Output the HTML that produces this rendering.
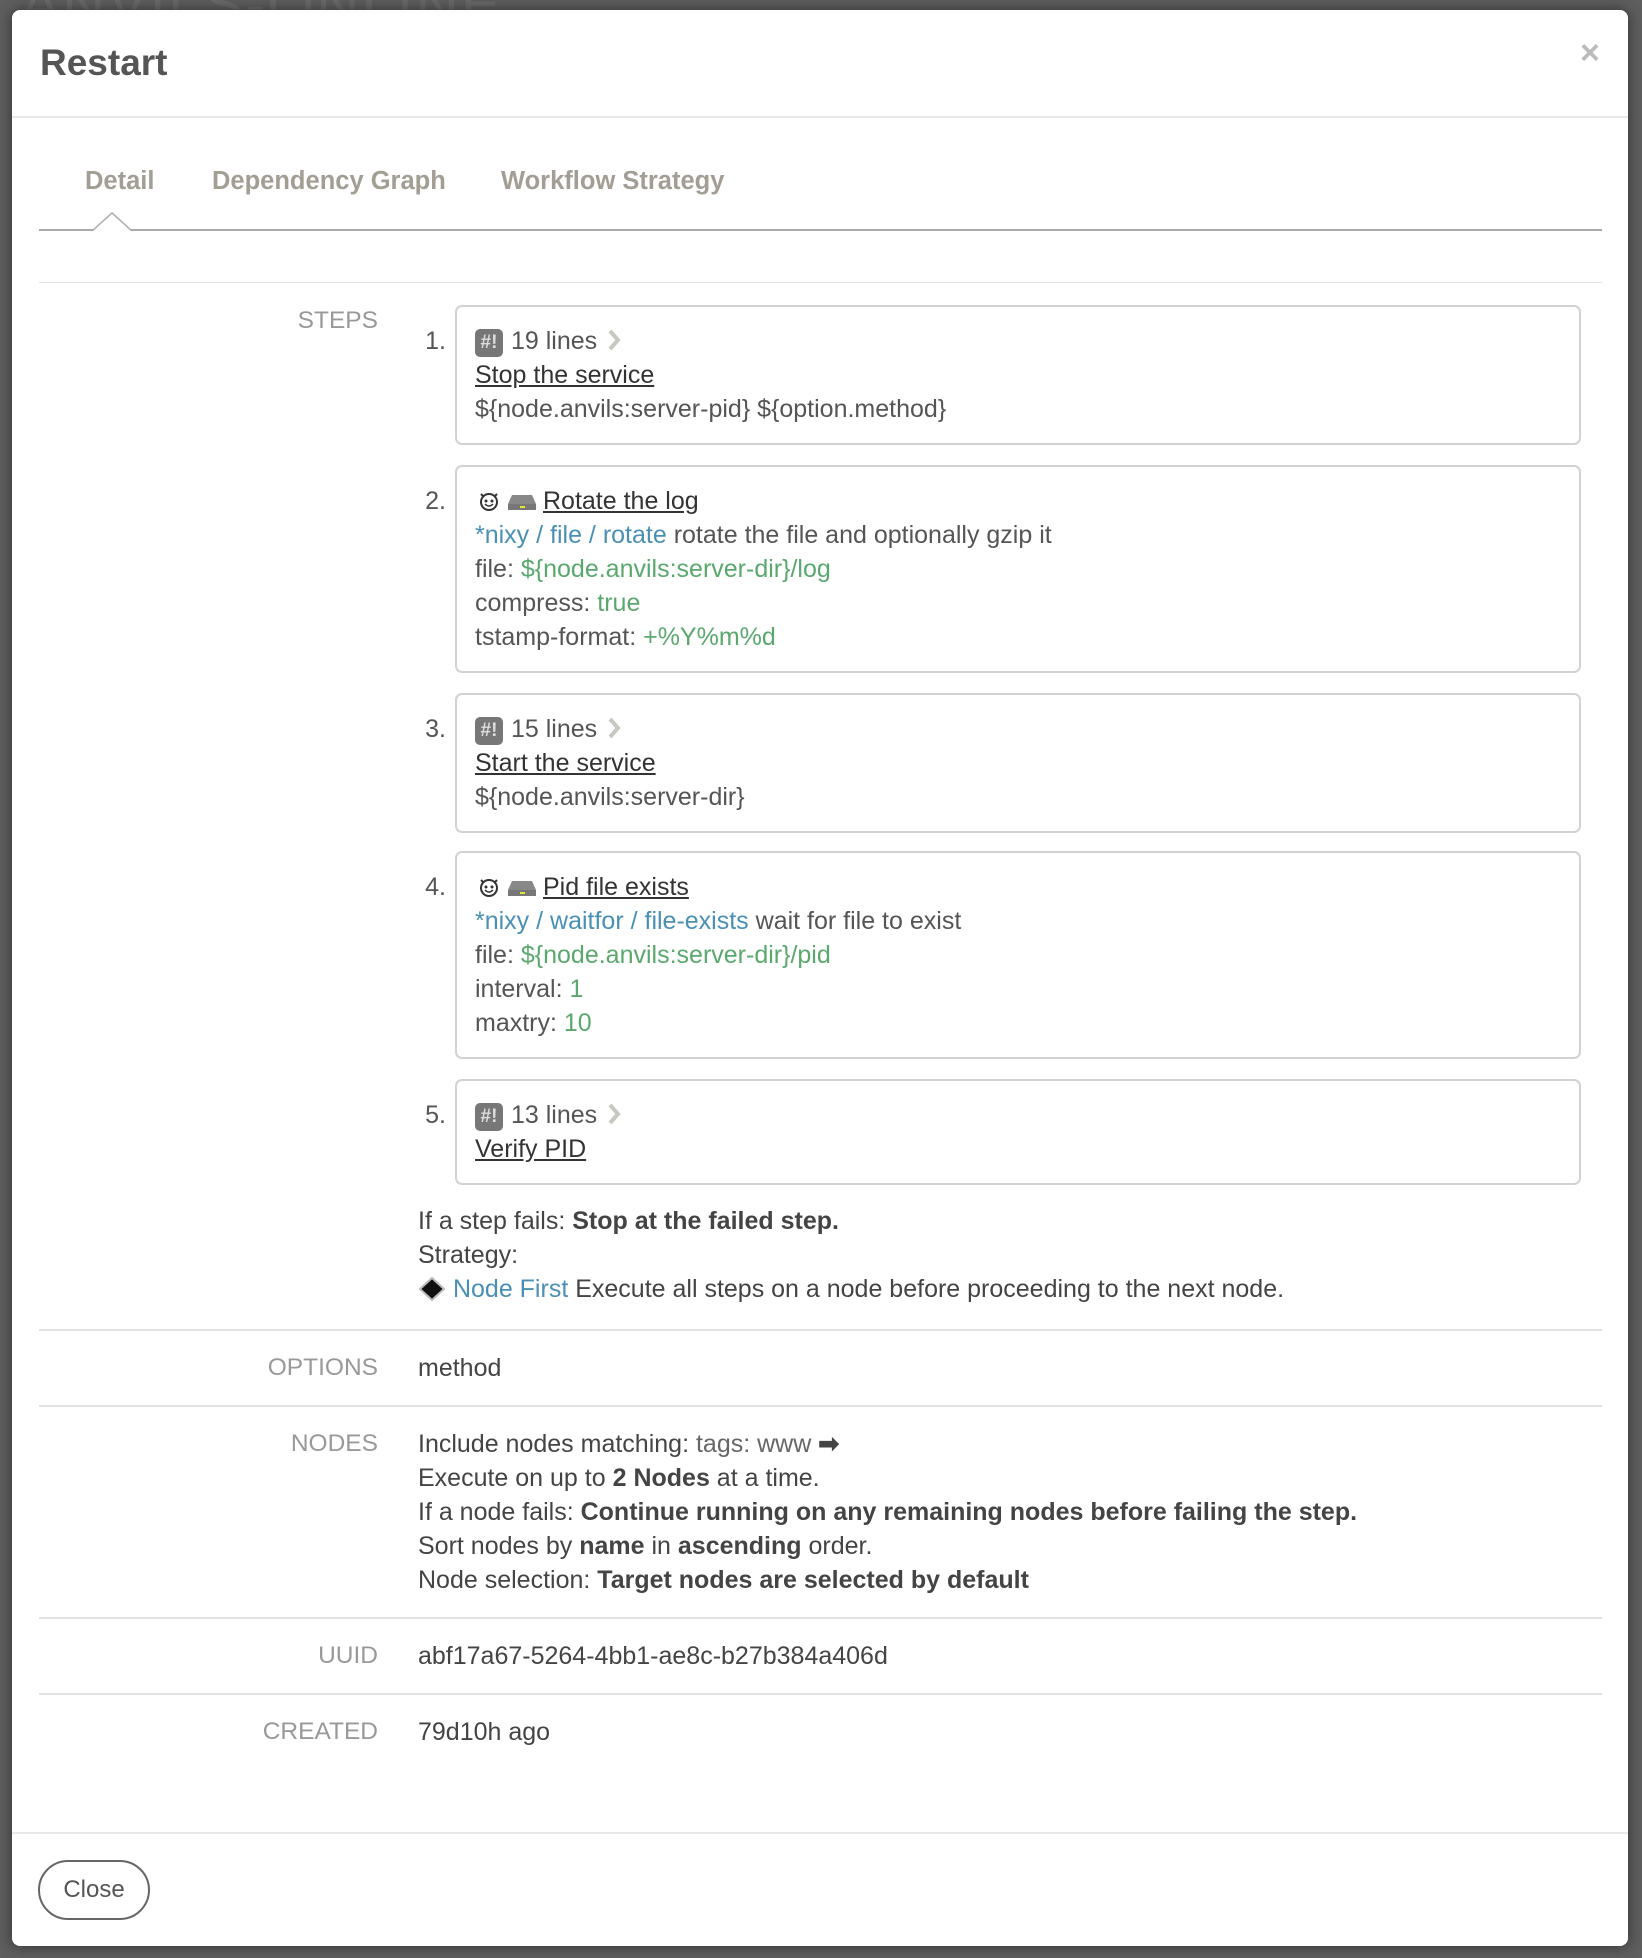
<!DOCTYPE html>
<html><head><meta charset="utf-8"><style>
*{box-sizing:border-box;margin:0;padding:0}
body{width:1642px;height:1958px;background:#5e5e5e;font-family:"Liberation Sans",sans-serif;position:relative;overflow:hidden;color:#444}
.bgt{position:absolute;left:20px;top:-30px;font-size:60px;color:#6a6a6a;letter-spacing:2px}
.modal{position:absolute;left:12px;top:10px;width:1616px;height:1936px;background:#fff;border-radius:8px;box-shadow:0 0 14px rgba(0,0,0,.5)}
.a{position:absolute}
.title{left:28px;top:32px;font-size:37px;font-weight:bold;color:#555}
.x{left:1568px;top:24px;font-size:34px;color:#bbb;font-weight:bold}
.hl{left:0;width:1616px;height:2px;background:#e8e8e8}
.tab{top:157px;font-size:25.5px;font-weight:bold;color:#a39e94}
.line{left:27px;width:1563px;height:1px;background:#e2e2e2}
.lab{width:366px;text-align:right;font-size:24.5px;color:#999;line-height:34px}
.box{left:443px;width:1126px;border:2px solid #d2d2d2;border-radius:7px;padding:17px 0 0 18px;font-size:25px;line-height:34px;color:#555;white-space:nowrap}
.num{width:434px;text-align:right;font-size:25px;line-height:34px;color:#555}
.u{text-decoration:underline;color:#333}
.b{color:#4a90b5}.g{color:#5aa86e}
.txt{left:406px;font-size:25px;line-height:34px;color:#444;white-space:nowrap}
.sh{display:inline-block;width:28px;height:28px;background:#777;border-radius:5px;color:#ddd;font-size:19px;line-height:28px;text-align:center;vertical-align:baseline;position:relative;top:-1px;font-weight:bold;margin-right:8px}
.chev{display:inline-block;vertical-align:-2px;margin-left:10px}
.btn{left:26px;top:1850px;width:112px;height:60px;border:2px solid #666;border-radius:30px;text-align:center;line-height:56px;font-size:24px;color:#555}
</style></head><body>
<div class="bgt">ANVILS-ONLINE</div>
<div class="modal">
<div class="a title">Restart</div>
<div class="a x">×</div>
<div class="a hl" style="top:106px"></div>
<div class="a tab" style="left:73px">Detail</div>
<div class="a tab" style="left:200px">Dependency Graph</div>
<div class="a tab" style="left:489px">Workflow Strategy</div>
<div class="a" style="left:27px;top:219px;width:1563px;height:2px;background:#aaa"></div>
<svg class="a" style="left:80px;top:202px" width="42" height="20"><path d="M0 19 L20 1 L40 19" fill="#fff" stroke="#aaa" stroke-width="1.5"/><rect x="2" y="18" width="36" height="4" fill="#fff"/></svg>
<div class="a line" style="top:272px"></div>

<div class="a lab" style="top:294px">STEPS</div>

<div class="a num" style="top:314px">1.</div>
<div class="a box" style="top:295px;height:140px"><span class="sh">#!</span>19 lines<svg class="chev" width="14" height="22"><path d="M3 2 L11 11 L3 20" stroke="#c8c8c0" stroke-width="4" fill="none"/></svg><br><span class="u">Stop the service</span><br>${node.anvils:server-pid} ${option.method}</div>

<div class="a num" style="top:474px">2.</div>
<div class="a box" style="top:455px;height:208px">
<svg width="24" height="22" style="vertical-align:-3px;margin:0 6px 0 2px"><circle cx="12" cy="12" r="8" fill="none" stroke="#333" stroke-width="2"/><path d="M4 4 L7 7 M20 4 L17 7" stroke="#333" stroke-width="2"/><circle cx="9" cy="11" r="1.5" fill="#333"/><circle cx="15" cy="11" r="1.5" fill="#333"/><path d="M8 14 Q12 18 16 14" stroke="#333" stroke-width="1.5" fill="none"/></svg><svg width="30" height="20" style="vertical-align:-3px;margin-right:6px"><path d="M5 3 H25 L29 12 V18 H1 V12 Z" fill="#888"/><rect x="1" y="12" width="28" height="6" fill="#777"/><rect x="13" y="14" width="5" height="2" fill="#e5e533"/></svg><span class="u">Rotate the log</span><br>
<span class="b">*nixy / file / rotate</span> rotate the file and optionally gzip it<br>
file: <span class="g">${node.anvils:server-dir}/log</span><br>
compress: <span class="g">true</span><br>
tstamp-format: <span class="g">+%Y%m%d</span></div>

<div class="a num" style="top:702px">3.</div>
<div class="a box" style="top:683px;height:140px"><span class="sh">#!</span>15 lines<svg class="chev" width="14" height="22"><path d="M3 2 L11 11 L3 20" stroke="#c8c8c0" stroke-width="4" fill="none"/></svg><br><span class="u">Start the service</span><br>${node.anvils:server-dir}</div>

<div class="a num" style="top:860px">4.</div>
<div class="a box" style="top:841px;height:208px">
<svg width="24" height="22" style="vertical-align:-3px;margin:0 6px 0 2px"><circle cx="12" cy="12" r="8" fill="none" stroke="#333" stroke-width="2"/><path d="M4 4 L7 7 M20 4 L17 7" stroke="#333" stroke-width="2"/><circle cx="9" cy="11" r="1.5" fill="#333"/><circle cx="15" cy="11" r="1.5" fill="#333"/><path d="M8 14 Q12 18 16 14" stroke="#333" stroke-width="1.5" fill="none"/></svg><svg width="30" height="20" style="vertical-align:-3px;margin-right:6px"><path d="M5 3 H25 L29 12 V18 H1 V12 Z" fill="#888"/><rect x="1" y="12" width="28" height="6" fill="#777"/><rect x="13" y="14" width="5" height="2" fill="#e5e533"/></svg><span class="u">Pid file exists</span><br>
<span class="b">*nixy / waitfor / file-exists</span> wait for file to exist<br>
file: <span class="g">${node.anvils:server-dir}/pid</span><br>
interval: <span class="g">1</span><br>
maxtry: <span class="g">10</span></div>

<div class="a num" style="top:1088px">5.</div>
<div class="a box" style="top:1069px;height:106px"><span class="sh">#!</span>13 lines<svg class="chev" width="14" height="22"><path d="M3 2 L11 11 L3 20" stroke="#c8c8c0" stroke-width="4" fill="none"/></svg><br><span class="u">Verify PID</span></div>

<div class="a txt" style="top:1194px">If a step fails: <b>Stop at the failed step.</b><br>Strategy:<br><svg width="28" height="26" style="vertical-align:-5px"><path d="M14 2 L26 13 L14 24 L2 13 Z" fill="#111" stroke="#bbb" stroke-width="2"/></svg> <span class="b">Node First</span> Execute all steps on a node before proceeding to the next node.</div>

<div class="a line" style="top:1319px;height:2px"></div>
<div class="a lab" style="top:1341px">OPTIONS</div>
<div class="a txt" style="top:1341px">method</div>
<div class="a line" style="top:1395px;height:2px"></div>
<div class="a lab" style="top:1417px">NODES</div>
<div class="a txt" style="top:1417px">Include nodes matching: <span style="color:#666">tags: www</span> <b>➡</b><br>Execute on up to <b>2 Nodes</b> at a time.<br>If a node fails: <b>Continue running on any remaining nodes before failing the step.</b><br>Sort nodes by <b>name</b> in <b>ascending</b> order.<br>Node selection: <b>Target nodes are selected by default</b></div>
<div class="a line" style="top:1607px;height:2px"></div>
<div class="a lab" style="top:1629px">UUID</div>
<div class="a txt" style="top:1629px">abf17a67-5264-4bb1-ae8c-b27b384a406d</div>
<div class="a line" style="top:1683px;height:2px"></div>
<div class="a lab" style="top:1705px">CREATED</div>
<div class="a txt" style="top:1705px">79d10h ago</div>

<div class="a hl" style="top:1822px"></div>
<div class="a btn">Close</div>
</div>
</body></html>
